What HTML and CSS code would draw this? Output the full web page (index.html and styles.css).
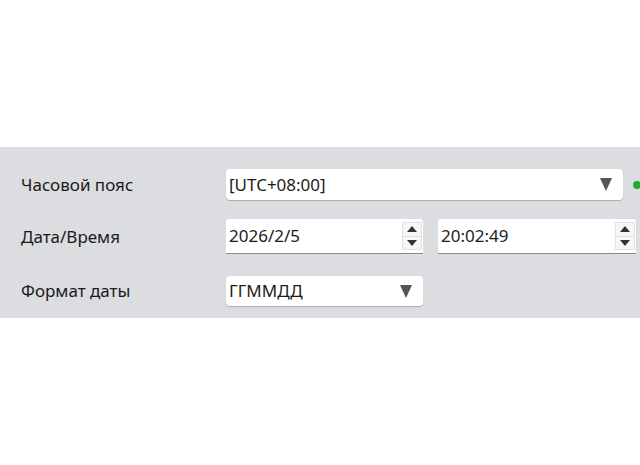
FILE: index.html
```html
<!DOCTYPE html>
<html lang="ru">

<head>
    <meta charset="UTF-8">
    <meta name="viewport" content="width=device-width, initial-scale=1.0">
    <title>Дата и время</title>
    <link rel="stylesheet" href="styles.css">
</head>

<body>
    <!-- Settings panel -->
    <div class="settings">
        <div class="row row-zone">
            <div class="label">Часовой пояс</div>
            <div class="field">
                <div class="select select-wide">
                    <span class="value">[UTC+08:00]</span>
                    <span class="arrow"></span>
                </div>
                <span class="status-dot"></span>
            </div>
        </div>

        <div class="row row-datetime">
            <div class="label">Дата/Время</div>
            <div class="field">
                <div class="spin-input">
                    <span class="value">2026/2/5</span>
                    <div class="spinner">
                        <span class="spin-up"></span>
                        <span class="spin-down"></span>
                    </div>
                </div>
                <div class="spin-input spin-time">
                    <span class="value">20:02:49</span>
                    <div class="spinner">
                        <span class="spin-up"></span>
                        <span class="spin-down"></span>
                    </div>
                </div>
            </div>
        </div>

        <div class="row row-format">
            <div class="label">Формат даты</div>
            <div class="field">
                <div class="select select-short">
                    <span class="value">ГГММДД</span>
                    <span class="arrow"></span>
                </div>
            </div>
        </div>
    </div>
</body>

</html>
```

FILE: styles.css
```css
/* Reset styling */
* {
    margin: 0;
    padding: 0;
    box-sizing: border-box;
    font-family: "Noto Sans", "Open Sans", sans-serif;
}

body {
    background-color: #fff;
    overflow: hidden;
}

/* Gray settings band */
.settings {
    margin-top: 147px;
    padding: 22px 0 12px 21px;
    background-color: #dcdde0;
}

.row {
    display: grid;
    grid-template-columns: 205px 1fr;
    align-items: center;
}

.row-datetime {
    margin-top: 19px;
}

.row-format {
    margin-top: 22px;
}

.label {
    font-size: 17px;
    line-height: 22px;
    color: #1a1a1a;
}

.field {
    display: flex;
    align-items: center;
}

.value {
    font-size: 17px;
    line-height: 22px;
    color: #1c1c1c;
}

/* Dropdowns */
.select {
    display: flex;
    align-items: center;
    justify-content: space-between;
    height: 31px;
    padding: 0 11px 0 3px;
    background-color: #fff;
    border-radius: 4px;
    box-shadow: 0 1px 1px rgba(0, 0, 0, 0.22);
}

.select-wide {
    width: 397px;
}

.select-short {
    width: 197px;
    height: 30px;
}

.arrow {
    width: 0;
    height: 0;
    border-left: 6px solid transparent;
    border-right: 6px solid transparent;
    border-top: 13px solid #555;
}

.status-dot {
    width: 8px;
    height: 8px;
    margin-left: 10px;
    border-radius: 50%;
    background-color: #22a83a;
}

/* Spin inputs */
.spin-input {
    display: flex;
    align-items: center;
    justify-content: space-between;
    width: 197px;
    height: 35px;
    padding: 0 1px 0 3px;
    background-color: #fff;
    border-radius: 3px 3px 0 0;
    border-bottom: 1px solid #8a8a8a;
}

.spin-time {
    width: 198px;
    margin-left: 15px;
}

.spinner {
    display: flex;
    flex-direction: column;
    width: 20px;
    height: 28px;
    border: 1px solid #e2e2e2;
    background-color: #f6f6f6;
}

.spin-up,
.spin-down {
    flex: 1;
    display: flex;
    align-items: center;
    justify-content: center;
}

.spin-up {
    border-bottom: 1px solid #e2e2e2;
}

.spin-up::before {
    content: "";
    border-left: 5px solid transparent;
    border-right: 5px solid transparent;
    border-bottom: 6px solid #333;
}

.spin-down::before {
    content: "";
    border-left: 5px solid transparent;
    border-right: 5px solid transparent;
    border-top: 6px solid #333;
}
```
